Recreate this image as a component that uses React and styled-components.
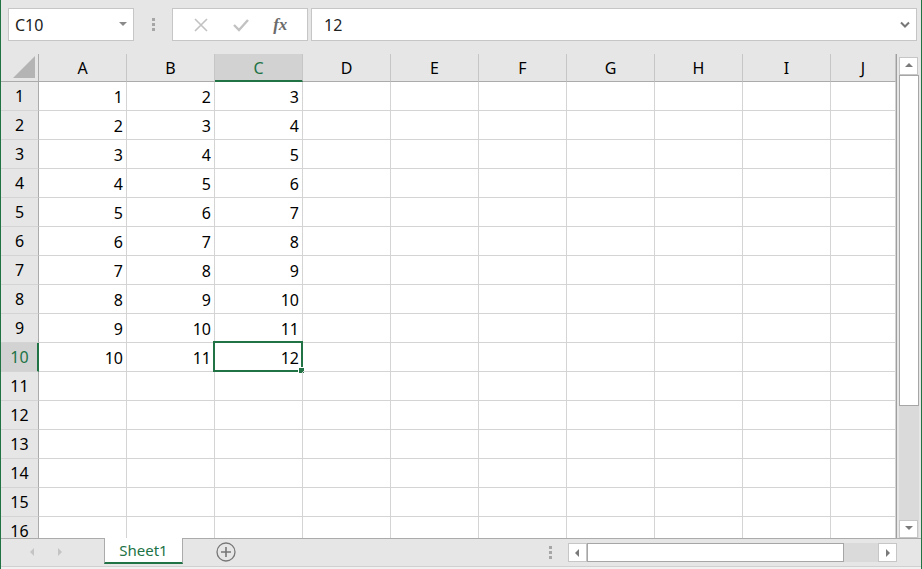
import styled, { createGlobalStyle } from "styled-components";

const GlobalStyle = createGlobalStyle`
  html, body { margin: 0; padding: 0; }
  body { font-family: "Noto Sans", "Open Sans", sans-serif; }
`;

const COLS = ["A", "B", "C", "D", "E", "F", "G", "H", "I", "J"];
const ROWS = 16;
const green = "#217346";

const Window = styled.div`
  width: 922px;
  height: 569px;
  background: #e6e6e6;
  border-left: 1px solid ${green};
  border-right: 1px solid ${green};
  box-sizing: border-box;
  display: flex;
  flex-direction: column;
  overflow: hidden;
`;

const Toolbar = styled.div`
  height: 54px;
  flex: none;
  display: flex;
  align-items: flex-start;
  padding: 8px 4px 0 7px;
  box-sizing: border-box;
`;

const Box = styled.div`
  height: 33px;
  box-sizing: border-box;
  background: #fff;
  border: 1px solid #c6c6c6;
  display: flex;
  align-items: center;
  font-size: 16px;
  color: #222;
`;

const NameBox = styled(Box)`
  width: 126px;
  padding: 0 6px 0 6px;
  justify-content: space-between;
`;

const Grip = styled.div`
  width: 38px;
  height: 33px;
  display: flex;
  flex-direction: column;
  align-items: center;
  justify-content: center;
  gap: 2px;
  span {
    width: 3px;
    height: 3px;
    background: #a6a6a6;
  }
`;

const Buttons = styled(Box)`
  width: 136px;
  justify-content: space-around;
  padding: 0 8px;
`;

const Fx = styled.span`
  font-family: "Liberation Serif", serif;
  font-style: italic;
  font-weight: bold;
  font-size: 17px;
  color: #6b6b6b;
`;

const Formula = styled(Box)`
  flex: 1;
  margin-left: 3px;
  padding: 0 6px 0 12px;
  justify-content: space-between;
`;

const Main = styled.div`
  flex: 1;
  display: flex;
  min-height: 0;
`;

const Sheet = styled.div`
  width: 895px;
  display: grid;
  grid-template-columns: 38px repeat(9, 88px) 65px;
  grid-template-rows: 28px repeat(${ROWS}, 29px);
  overflow: hidden;
  border-right: 1px solid #9f9f9f;
  background: #fff;
`;

const Corner = styled.div`
  background: #e6e6e6;
  border-right: 1px solid #ababab;
  border-bottom: 1px solid #ababab;
  box-sizing: border-box;
  display: flex;
  align-items: flex-end;
  justify-content: flex-end;
  padding: 0 3px 3px 0;
`;

const ColHead = styled.div`
  background: ${(p) => (p.$active ? "#d2d2d2" : "#e6e6e6")};
  color: ${(p) => (p.$active ? green : "#000")};
  border-right: 1px solid #c6c6c6;
  border-bottom: ${(p) => (p.$active ? `2px solid ${green}` : "1px solid #ababab")};
  box-sizing: border-box;
  display: flex;
  align-items: center;
  justify-content: center;
  font-size: 16px;
  padding-top: ${(p) => (p.$active ? "1px" : "0")};
`;

const RowHead = styled.div`
  background: ${(p) => (p.$active ? "#d2d2d2" : "#e6e6e6")};
  color: ${(p) => (p.$active ? green : "#000")};
  border-right: ${(p) => (p.$active ? `2px solid ${green}` : "1px solid #ababab")};
  border-bottom: 1px solid #d4d4d4;
  box-sizing: border-box;
  display: flex;
  align-items: center;
  justify-content: center;
  padding-left: ${(p) => (p.$active ? "1px" : "0")};
  font-size: 16px;
`;

const Cell = styled.div`
  border-right: 1px solid #d4d4d4;
  border-bottom: 1px solid #d4d4d4;
  box-sizing: border-box;
  display: flex;
  align-items: center;
  justify-content: flex-end;
  padding-right: 3px;
  padding-top: 1px;
  font-size: 16px;
  color: #000;
  position: relative;
`;

const Selection = styled.div`
  position: absolute;
  left: -2px;
  top: -2px;
  right: -1px;
  bottom: -1px;
  border: 2px solid ${green};
  pointer-events: none;
  &::after {
    content: "";
    position: absolute;
    right: -4px;
    bottom: -4px;
    width: 5px;
    height: 5px;
    background: ${green};
    border: 1px solid #fff;
  }
`;

const VScroll = styled.div`
  width: 24px;
  display: flex;
  flex-direction: column;
  padding: 3px 2px 0 2px;
  box-sizing: border-box;
`;

const ArrowBtn = styled.div`
  width: 19px;
  height: 18px;
  flex: none;
  background: #fff;
  border: 1px solid #c6c6c6;
  box-sizing: border-box;
  display: flex;
  align-items: center;
  justify-content: center;
`;

const VTrack = styled.div`
  flex: 1;
  background: #dadada;
  display: flex;
  flex-direction: column;
`;

const VThumb = styled.div`
  height: 331px;
  background: #fff;
  border: 1px solid #a6a6a6;
  box-sizing: border-box;
`;

const Bottom = styled.div`
  height: 28px;
  flex: none;
  display: flex;
  align-items: flex-start;
  border-top: 1px solid #ababab;
  box-sizing: border-box;
`;

const StatusStrip = styled.div`
  height: 3px;
  flex: none;
  background: #f1f1f1;
  border-top: 1px solid #d0d0d0;
  box-sizing: border-box;
`;

const Nav = styled.div`
  width: 103px;
  display: flex;
  gap: 20px;
  padding-left: 27px;
  padding-top: 8px;
  box-sizing: border-box;
`;

const Tab = styled.div`
  width: 79px;
  height: 26px;
  margin-top: -1px;
  background: #fff;
  border: 1px solid #ababab;
  border-top: none;
  border-bottom: 2px solid ${green};
  box-sizing: border-box;
  color: ${green};
  font-size: 15px;
  display: flex;
  align-items: center;
  justify-content: center;
`;

const AddSheet = styled.div`
  margin-left: 33px;
  margin-top: 3px;
  width: 20px;
  height: 20px;
`;

const Spacer = styled.div`
  flex: 1;
`;

const HGrip = styled.div`
  width: 16px;
  display: flex;
  flex-direction: column;
  align-items: center;
  gap: 2px;
  padding-top: 7px;
  margin-right: 10px;
  span {
    width: 3px;
    height: 3px;
    background: #a6a6a6;
  }
`;

const HScroll = styled.div`
  width: 329px;
  height: 19px;
  margin-top: 4px;
  margin-right: 24px;
  display: flex;
  background: #dadada;
`;

const HThumb = styled.div`
  width: 257px;
  background: #fff;
  border: 1px solid #a6a6a6;
  box-sizing: border-box;
`;

const HArrow = styled(ArrowBtn)`
  width: 19px;
  height: 19px;
`;

const Tri = ({ dir }) => {
  const pts = {
    up: "1,6 5,2 9,6",
    down: "1,2 5,6 9,2",
    left: "6,1 2,5 6,9",
    right: "3,1 7,5 3,9",
  }[dir];
  return (
    <svg width="10" height="10" viewBox="0 0 10 10">
      <polygon points={pts} fill="#7a7a7a" />
    </svg>
  );
};

const value = (r, c) => {
  if (r > 10 || c > 2) return "";
  return r + c;
};

export default function App() {
  return (
    <>
      <GlobalStyle />
      <Window>
        <Toolbar>
          <NameBox>
            C10
            <svg width="8" height="5" viewBox="0 0 8 5">
              <polygon points="0,0 8,0 4,4" fill="#8a8a8a" />
            </svg>
          </NameBox>
          <Grip>
            <span />
            <span />
            <span />
          </Grip>
          <Buttons>
            <svg width="16" height="16" viewBox="0 0 16 16">
              <path d="M2 2 L14 14 M14 2 L2 14" stroke="#c2c2c2" strokeWidth="1.6" />
            </svg>
            <svg width="18" height="16" viewBox="0 0 18 16">
              <path d="M2 8 L7 13 L16 3" stroke="#c2c2c2" strokeWidth="2.4" fill="none" />
            </svg>
            <Fx>fx</Fx>
          </Buttons>
          <Formula>
            12
            <svg width="10" height="8" viewBox="0 0 10 8">
              <path d="M1 1.5 L5 5.5 L9 1.5" stroke="#777" strokeWidth="2" fill="none" />
            </svg>
          </Formula>
        </Toolbar>
        <Main>
          <Sheet>
            <Corner>
              <svg width="22" height="22" viewBox="0 0 22 22">
                <polygon points="22,0 22,22 0,22" fill="#b4b4b4" />
              </svg>
            </Corner>
            {COLS.map((c, i) => (
              <ColHead key={c} $active={i === 2}>
                {c}
              </ColHead>
            ))}
            {Array.from({ length: ROWS }, (_, r) => [
              <RowHead key={`h${r}`} $active={r === 9}>
                {r + 1}
              </RowHead>,
              ...COLS.map((c, ci) => (
                <Cell key={`${r}-${c}`}>
                  {value(r + 1, ci)}
                  {r === 9 && ci === 2 && <Selection />}
                </Cell>
              )),
            ])}
          </Sheet>
          <VScroll>
            <ArrowBtn>
              <Tri dir="up" />
            </ArrowBtn>
            <VTrack>
              <VThumb />
              <Spacer />
              <ArrowBtn>
                <Tri dir="down" />
              </ArrowBtn>
            </VTrack>
          </VScroll>
        </Main>
        <Bottom>
          <Nav>
            <svg width="8" height="10" viewBox="0 0 8 10">
              <polygon points="6,1 2,5 6,9" fill="#c4c4c4" />
            </svg>
            <svg width="8" height="10" viewBox="0 0 8 10">
              <polygon points="2,1 6,5 2,9" fill="#c4c4c4" />
            </svg>
          </Nav>
          <Tab>Sheet1</Tab>
          <AddSheet>
            <svg width="20" height="20" viewBox="0 0 20 20">
              <circle cx="10" cy="10" r="9" stroke="#777" strokeWidth="1.3" fill="none" />
              <path d="M10 5 V15 M5 10 H15" stroke="#777" strokeWidth="1.6" />
            </svg>
          </AddSheet>
          <Spacer />
          <HGrip>
            <span />
            <span />
            <span />
          </HGrip>
          <HScroll>
            <HArrow>
              <Tri dir="left" />
            </HArrow>
            <HThumb />
            <Spacer />
            <HArrow>
              <Tri dir="right" />
            </HArrow>
          </HScroll>
        </Bottom>
        <StatusStrip />
      </Window>
    </>
  );
}
